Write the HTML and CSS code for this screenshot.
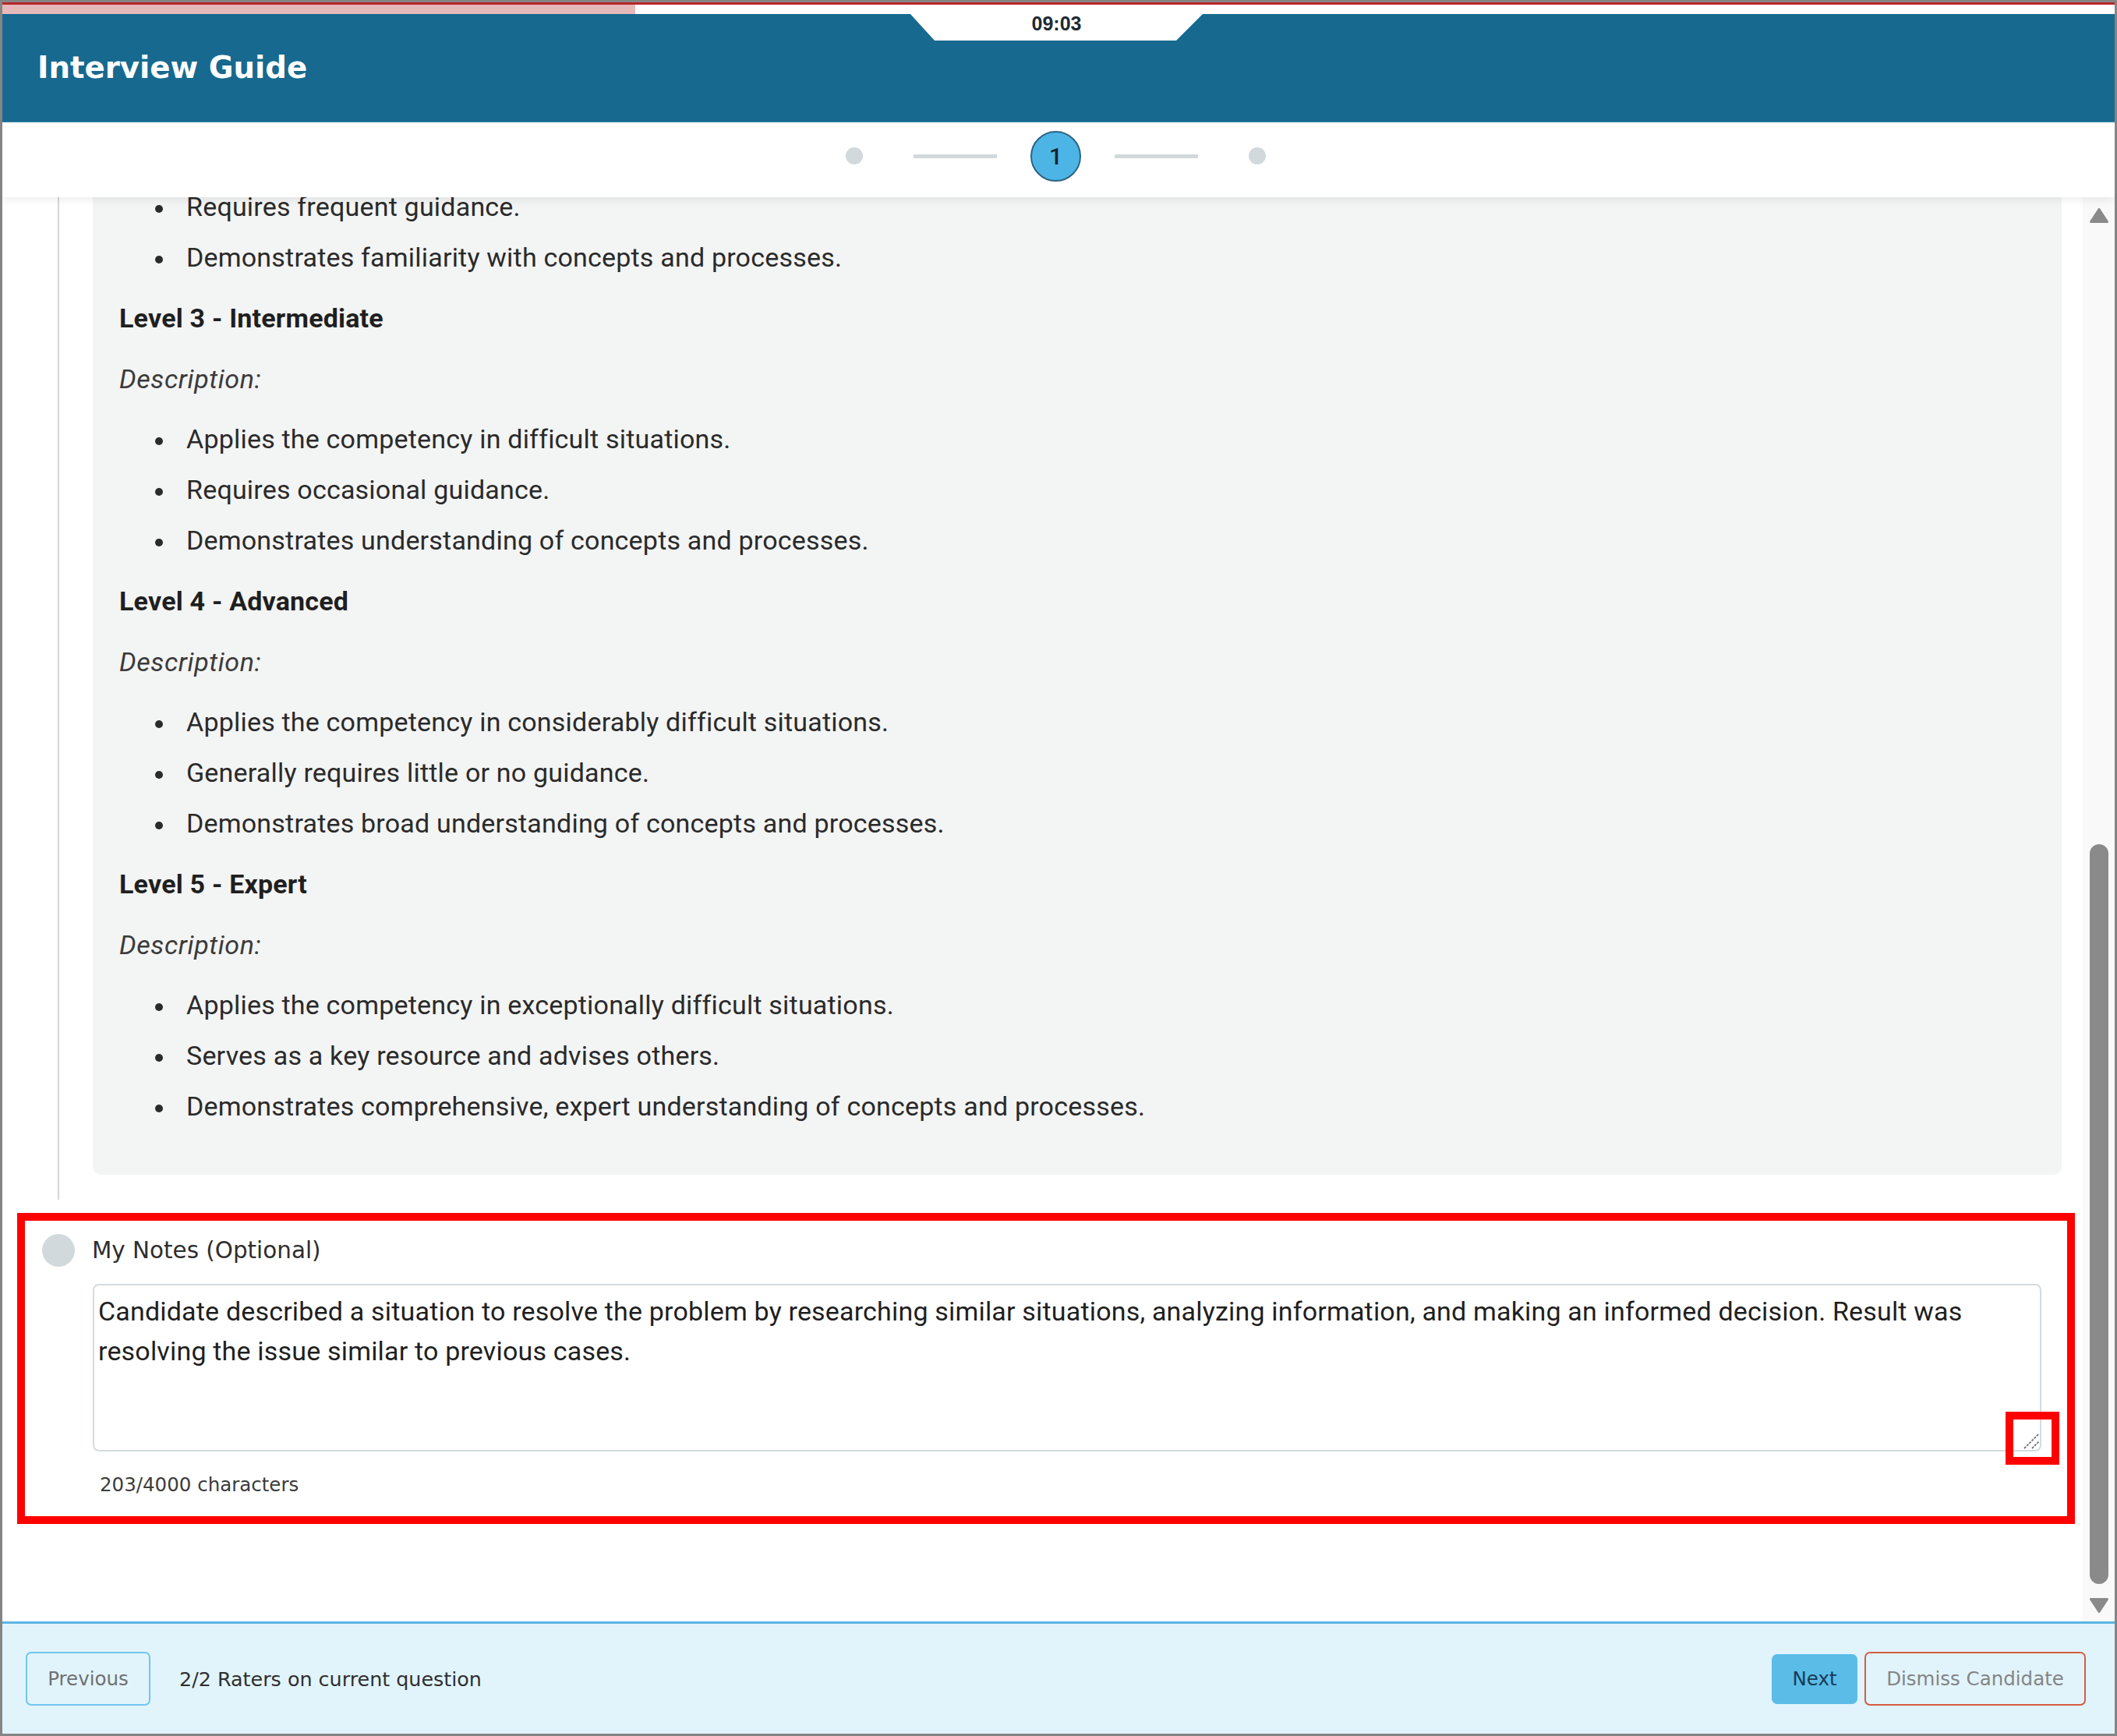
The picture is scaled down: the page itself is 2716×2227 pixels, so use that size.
FILE: index.html
```html
<!DOCTYPE html>
<html lang="en">
<head>
<meta charset="utf-8">
<title>Interview Guide</title>
<link rel="stylesheet" href="styles.css">
</head>
<body>
<div class="app">
  <div class="topbar">
    <div class="redline"></div>
    <div class="progress"><div class="progress-fill"></div></div>
  </div>
  <header class="header">
    <h1 class="title">Interview Guide</h1>
    <div class="timer">09:03</div>
  </header>
  <nav class="stepper">
    <span class="step-dot first"></span>
    <span class="step-line"></span>
    <span class="step-current">1</span>
    <span class="step-line"></span>
    <span class="step-dot last"></span>
  </nav>
  <main class="main">
    <div class="scroll">
      <section class="criteria">
        <div class="levels">
          <ul class="list first">
            <li>Requires frequent guidance.</li>
            <li>Demonstrates familiarity with concepts and processes.</li>
          </ul>
          <p class="level-title">Level 3 - Intermediate</p>
          <p class="desc">Description:</p>
          <ul class="list">
            <li>Applies the competency in difficult situations.</li>
            <li>Requires occasional guidance.</li>
            <li>Demonstrates understanding of concepts and processes.</li>
          </ul>
          <p class="level-title">Level 4 - Advanced</p>
          <p class="desc">Description:</p>
          <ul class="list">
            <li>Applies the competency in considerably difficult situations.</li>
            <li>Generally requires little or no guidance.</li>
            <li>Demonstrates broad understanding of concepts and processes.</li>
          </ul>
          <p class="level-title">Level 5 - Expert</p>
          <p class="desc">Description:</p>
          <ul class="list">
            <li>Applies the competency in exceptionally difficult situations.</li>
            <li>Serves as a key resource and advises others.</li>
            <li>Demonstrates comprehensive, expert understanding of concepts and processes.</li>
          </ul>
        </div>
      </section>
      <section class="notes">
        <div class="notes-head">
          <span class="notes-dot"></span>
          <label class="notes-label" for="notes">My Notes (Optional)</label>
        </div>
        <textarea id="notes" class="notes-input">Candidate described a situation to resolve the problem by researching similar situations, analyzing information, and making an informed decision. Result was resolving the issue similar to previous cases.</textarea>
        <div class="count">203/4000 characters</div>
        <svg class="grip" width="26" height="26" viewBox="0 0 26 26">
          <line x1="4" y1="23" x2="23" y2="4" stroke="#6e6e6e" stroke-width="1.8" stroke-dasharray="3 1.5"/>
          <line x1="14" y1="23" x2="23" y2="14" stroke="#6e6e6e" stroke-width="1.8" stroke-dasharray="3 1.5"/>
        </svg>
        <div class="annot annot-box"></div>
        <div class="annot annot-handle"></div>
      </section>
    </div>
    <div class="scrollbar">
      <svg class="sb-arrow" width="24" height="19" viewBox="0 0 24 19"><path d="M12 1.5 L22.5 17.5 L1.5 17.5 Z" fill="#8a8a8a" stroke="#8a8a8a" stroke-width="3" stroke-linejoin="round"/></svg>
      <div class="sb-thumb"></div>
      <svg class="sb-arrow down" width="24" height="19" viewBox="0 0 24 19"><path d="M1.5 1.5 L22.5 1.5 L12 17.5 Z" fill="#8a8a8a" stroke="#8a8a8a" stroke-width="3" stroke-linejoin="round"/></svg>
    </div>
  </main>
  <footer class="footer">
    <button class="btn btn-prev" type="button">Previous</button>
    <span class="raters">2/2 Raters on current question</span>
    <span class="spacer"></span>
    <button class="btn btn-next" type="button">Next</button>
    <button class="btn btn-dismiss" type="button">Dismiss Candidate</button>
  </footer>
</div>
</body>
</html>
```

FILE: styles.css
```css
* { box-sizing: border-box; }

html, body {
  margin: 0;
  padding: 0;
  background: #ffffff;
}

.app {
  width: 2716px;
  height: 2227px;
  border: 3px solid #858585;
  display: flex;
  flex-direction: column;
  overflow: hidden;
  font-family: Roboto, "Liberation Sans", sans-serif;
  color: #2a2a2a;
}

/* top progress strip */
.topbar {
  height: 15px;
  flex: none;
  display: flex;
  flex-direction: column;
}
.redline {
  height: 3px;
  background: #b8262b;
}
.progress {
  flex: 1;
  background: #ffffff;
}
.progress-fill {
  width: 812px;
  height: 100%;
  background: #e5b9ba;
}

/* header */
.header {
  position: relative;
  height: 139px;
  flex: none;
  background: #17698f;
  border-bottom: 1px solid #3f8db4;
  display: flex;
  align-items: center;
  padding-left: 45px;
  padding-bottom: 2px;
}
.title {
  margin: 0;
  font-family: "DejaVu Sans", Verdana, sans-serif;
  font-weight: 700;
  font-size: 38.7px;
  color: #ffffff;
}
.timer {
  position: absolute;
  top: -1px;
  left: 1164px;
  width: 377px;
  height: 35px;
  background: #ffffff;
  clip-path: polygon(0 0, 100% 0, calc(100% - 35px) 100%, 32px 100%);
  text-align: center;
  font-family: "Liberation Sans", Arial, sans-serif;
  font-weight: 700;
  font-size: 25px;
  line-height: 27px;
  color: #1e2a33;
}

/* stepper */
.stepper {
  position: relative;
  z-index: 2;
  height: 96px;
  flex: none;
  background: #ffffff;
  display: flex;
  justify-content: center;
  align-items: center;
  padding: 0 7px 10px 0;
  box-shadow: 0 4px 10px rgba(0, 0, 0, 0.07);
}
.step-dot {
  width: 22px;
  height: 22px;
  border-radius: 50%;
  background: #d2d9dc;
}
.step-dot.first { margin-right: 22px; }
.step-dot.last { margin-left: 22px; }
.step-line {
  width: 107px;
  height: 5px;
  background: #d2d9dc;
  margin: 0 43px;
}
.step-current {
  width: 65px;
  height: 65px;
  border-radius: 50%;
  background: #4db5e6;
  border: 2px solid #2b6384;
  display: flex;
  align-items: center;
  justify-content: center;
  font-family: Roboto, sans-serif;
  font-weight: 500;
  font-size: 30px;
  color: #14232e;
}

/* main scroll area */
.main {
  flex: 1;
  min-height: 0;
  display: flex;
}
.scroll {
  flex: 1;
  min-width: 0;
  overflow: hidden;
  background: #ffffff;
}

.criteria {
  margin: -12px 27px 0 71px;
  border-left: 2px solid #d6d6d6;
  padding: 0 0 32px 43px;
}
.levels {
  background: #f3f4f4;
  padding: 0 34px 34px;
  border-radius: 0 0 10px 10px;
  font-size: 34px;
  line-height: 48px;
  letter-spacing: 0.2px;
  color: #2a2a2a;
}
.list {
  margin: 29px 0 30px;
  padding-left: 86px;
  list-style: none;
}
.list.first { margin-top: 0; }
.list li + li { margin-top: 17px; }
.list li::before {
  content: "";
  display: inline-block;
  width: 10px;
  height: 10px;
  border-radius: 50%;
  background: #2a2a2a;
  margin-left: -40px;
  margin-right: 30px;
  vertical-align: middle;
}
.level-title {
  margin: 0;
  font-weight: 700;
  color: #1f1f1f;
}
.desc {
  margin: 30px 0 0;
  font-style: italic;
  letter-spacing: 0.6px;
  color: #3a3a3a;
}

/* notes */
.notes {
  position: relative;
  margin-top: 17px;
  padding: 27px 0 35px;
}
.notes-head {
  display: flex;
  align-items: center;
  height: 42px;
}
.notes-dot {
  width: 42px;
  height: 42px;
  border-radius: 50%;
  background: #d2d9dc;
  margin-left: 51px;
}
.notes-label {
  margin-left: 22px;
  font-family: "DejaVu Sans", Verdana, sans-serif;
  font-size: 29.4px;
  color: #2e2e2e;
}
.notes-input {
  display: block;
  margin: 22px 0 0 116px;
  width: 2500px;
  height: 215px;
  border: 2px solid #d5dbde;
  border-radius: 8px;
  padding: 8px 5px;
  font-family: Roboto, sans-serif;
  font-size: 34px;
  line-height: 51px;
  letter-spacing: 0.18px;
  color: #1f1f1f;
  background: #ffffff;
  resize: none;
  outline: none;
}
.count {
  margin: 28px 0 0 125px;
  font-family: "DejaVu Sans", Verdana, sans-serif;
  font-size: 24.5px;
  line-height: 30px;
  color: #3c3c3c;
}
.grip {
  position: absolute;
  left: 2590px;
  top: 279px;
}
.annot {
  position: absolute;
  border: 10px solid #ff0000;
  pointer-events: none;
}
.annot-box {
  left: 19px;
  top: 0;
  width: 2640px;
  height: 399px;
}
.annot-handle {
  left: 2570px;
  top: 255px;
  width: 69px;
  height: 68px;
}

/* scrollbar */
.scrollbar {
  width: 41px;
  flex: none;
  background: #f9f9f9;
  display: flex;
  flex-direction: column;
  align-items: center;
  padding-top: 14px;
}
.sb-arrow { display: block; }
.sb-thumb {
  width: 24px;
  height: 949px;
  margin-top: 797px;
  border-radius: 12px;
  background: #8a8a8a;
}
.sb-arrow.down { margin-top: 18px; }

/* footer */
.footer {
  height: 144px;
  flex: none;
  border-top: 3px solid #5cb6e3;
  background: #e1f4fc;
  display: flex;
  align-items: center;
  padding: 0 37px 0 30px;
  font-family: "DejaVu Sans", Verdana, sans-serif;
  font-size: 24.5px;
}
.btn {
  font-family: "DejaVu Sans", Verdana, sans-serif;
  font-size: 24.5px;
  border-radius: 7px;
  background: transparent;
  padding: 0;
  cursor: pointer;
}
.btn-prev {
  width: 160px;
  height: 69px;
  border: 2px solid #70c5ee;
  color: #707070;
}
.raters {
  margin-left: 37px;
  font-size: 25.4px;
  color: #2f2f2f;
}
.spacer { flex: 1; }
.btn-next {
  width: 110px;
  height: 64px;
  border: none;
  background: #5bbce8;
  color: #183b55;
}
.btn-dismiss {
  margin-left: 9px;
  width: 284px;
  height: 69px;
  border: 2px solid #d65c40;
  color: #858585;
}
```
